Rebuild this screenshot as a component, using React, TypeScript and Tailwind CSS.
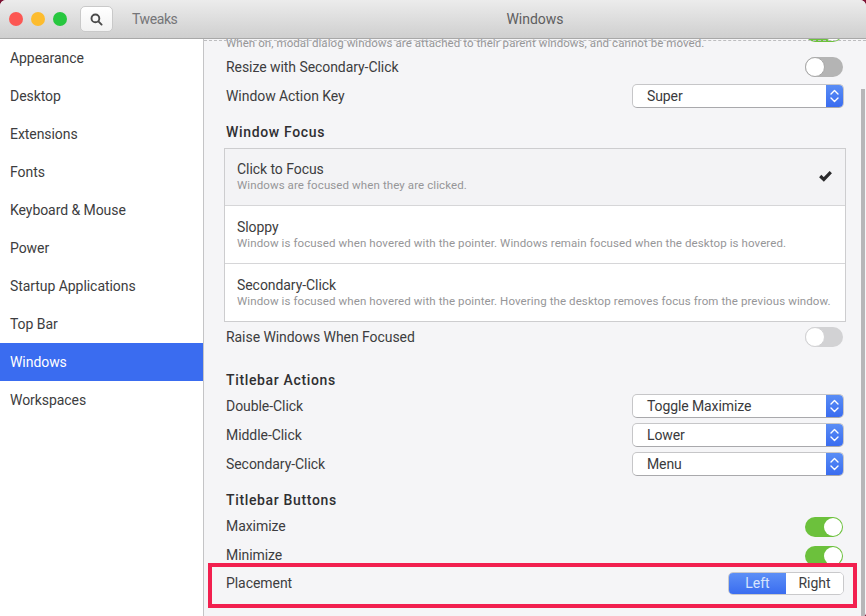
import React from "react";

const font = { fontFamily: "Roboto, 'Liberation Sans', sans-serif" };

const nav = ["Appearance", "Desktop", "Extensions", "Fonts", "Keyboard & Mouse", "Power", "Startup Applications", "Top Bar", "Windows", "Workspaces"];

function Toggle({ on, dim }: { on?: boolean; dim?: boolean }) {
  if (on) {
    return (
      <div className="mr-px flex h-5 w-[38px] items-center justify-end rounded-full bg-[#6cc13c]">
        <div className="mr-px h-[18px] w-[18px] rounded-full bg-white" />
      </div>
    );
  }
  return (
    <div className={`mr-px flex h-5 w-[38px] items-center rounded-full ${dim ? "bg-[#d2d2d4]" : "bg-[#b4b4b4]"}`}>
      <div className={`h-5 w-5 rounded-full border bg-white ${dim ? "border-[#d2d2d4]" : "border-[#a8a8a8]"}`} />
    </div>
  );
}

function Select({ value, lift }: { value: string; lift?: boolean }) {
  return (
    <div className={`flex h-6 w-[212px] overflow-hidden rounded-[5px] border border-[#c6c6c8] border-b-[#a9a9ac] bg-white ${lift ? "mb-px" : ""}`}>
      <div className="flex-1 pl-[14px] text-[14px] leading-[22px] tracking-[-0.1px] text-[#3a3a3c]">{value}</div>
      <div className="flex w-[17px] items-center justify-center bg-gradient-to-b from-[#5a8df5] to-[#3a6cf0]">
        <svg width="11" height="16" viewBox="0 0 11 16" fill="none" stroke="#fff" strokeWidth="1.4" strokeLinecap="round" strokeLinejoin="round">
          <path d="M2 6 L5.5 2.5 L9 6" />
          <path d="M2 10 L5.5 13.5 L9 10" />
        </svg>
      </div>
    </div>
  );
}

function Row({ label, h, children }: { label: string; h: string; children: React.ReactNode }) {
  return (
    <div className={`flex items-center justify-between ${h}`}>
      <span className="text-[14px] tracking-[-0.06px] text-[#3d3d40]">{label}</span>
      {children}
    </div>
  );
}

function Heading({ children, cls }: { children: React.ReactNode; cls: string }) {
  return <div className={`text-[14px] font-medium leading-5 tracking-[0.65px] text-[#2f2f32] ${cls}`}>{children}</div>;
}

function Item({ title, desc, active, h, border }: { title: string; desc: string; active?: boolean; h: string; border?: boolean }) {
  return (
    <div className={`flex items-center justify-between px-3 ${h} ${active ? "bg-[#f3f3f5] pb-[2px]" : "bg-white"} ${border ? "border-b border-[#d6d6d8]" : ""}`}>
      <div>
        <div className="text-[14px] leading-[18px] tracking-[-0.06px] text-[#3d3d40]">{title}</div>
        <div className="text-[11.5px] leading-[15px] tracking-[0.1px] text-[#969698]">{desc}</div>
      </div>
      {active && (
        <svg width="13" height="12" viewBox="0 0 13 12" className="mr-px">
          <path d="M1.2 6 L4.8 9.4 L11.8 2.2" fill="none" stroke="#2a2a2c" strokeWidth="3.2" />
        </svg>
      )}
    </div>
  );
}

export default function App() {
  return (
    <div className="h-[616px] w-[866px] overflow-hidden bg-[#7d1233]">
      <div style={font} className="relative flex h-[616px] w-[866px] flex-col overflow-hidden rounded-t-[6px] rounded-br-[3px] bg-[#f5f5f7]">
        <header className="flex h-[39px] shrink-0 items-center border-b border-[#a8a8a8] bg-gradient-to-b from-[#ececec] to-[#cfcfcf]">
          <div className="flex w-[204px] shrink-0 items-center pl-[9px]">
            <div className="h-[14px] w-[14px] rounded-full bg-[#fc5753]" />
            <div className="ml-2 h-[14px] w-[14px] rounded-full bg-[#fdbc2e]" />
            <div className="ml-2 h-[14px] w-[14px] rounded-full bg-[#27c73f]" />
            <div className="ml-[13px] flex h-[26px] w-[33px] items-center justify-center rounded-[5px] border border-[#c9c9c9] bg-gradient-to-b from-white to-[#f2f2f2]">
              <svg width="13" height="13" viewBox="0 0 13 13" fill="none" stroke="#4a4a4a" strokeWidth="1.9" strokeLinecap="round">
                <circle cx="5.4" cy="5.4" r="3.9" />
                <path d="M8.4 8.4 L11.6 11.6" />
              </svg>
            </div>
            <span className="ml-[19px] text-[14px] tracking-[-0.4px] text-[#757578]">Tweaks</span>
          </div>
          <div className="flex-1 text-center text-[14px] text-[#5e5e60]">Windows</div>
        </header>

        <div className="flex min-h-0 flex-1">
          <aside className="w-[204px] shrink-0 border-r border-[#c4c4c6] bg-white">
            {nav.map((n) => (
              <div key={n} className={`flex h-[38px] items-center pl-[10px] text-[14px] tracking-[-0.06px] ${n === "Windows" ? "bg-[#3a6cf0] text-white" : "text-[#3d3d40]"}`}>
                {n}
              </div>
            ))}
          </aside>

          <main className="relative min-w-0 flex-1 overflow-hidden px-[22px]">
            <div className="-mt-[7px]">
              <div className="-mb-[10px] flex h-[24px] items-center justify-between">
                <span className="text-[11.5px] tracking-[0.07px] text-[#969698]">When on, modal dialog windows are attached to their parent windows, and cannot be moved.</span>
                <div className="-mt-[24px]"><Toggle on /></div>
              </div>
              <Row label="Resize with Secondary-Click" h="h-[30px] mt-[6px]"><Toggle /></Row>
              <Row label="Window Action Key" h="h-[28px]"><Select value="Super" /></Row>
              <Heading cls="mt-[12px]">Window Focus</Heading>
              <div className="-mx-[2px] mt-[6px] border border-[#cdcdcf]">
                <Item active border h="h-[57px]" title="Click to Focus" desc="Windows are focused when they are clicked." />
                <Item border h="h-[58px]" title="Sloppy" desc="Window is focused when hovered with the pointer. Windows remain focused when the desktop is hovered." />
                <Item h="h-[57px]" title="Secondary-Click" desc="Window is focused when hovered with the pointer. Hovering the desktop removes focus from the previous window." />
              </div>
              <Row label="Raise Windows When Focused" h="h-[30px]"><Toggle dim /></Row>
              <Heading cls="mt-[18px]">Titlebar Actions</Heading>
              <Row label="Double-Click" h="h-[29px] mt-[2px]"><Select lift value="Toggle Maximize" /></Row>
              <Row label="Middle-Click" h="h-[29px]"><Select lift value="Lower" /></Row>
              <Row label="Secondary-Click" h="h-[29px]"><Select lift value="Menu" /></Row>
              <Heading cls="mt-[11px]">Titlebar Buttons</Heading>
              <Row label="Maximize" h="h-[29px] mt-[2px]"><Toggle on /></Row>
              <Row label="Minimize" h="h-[29px]"><Toggle on /></Row>
              <Row label="Placement" h="h-[27px]">
                <div className="flex h-[23px] w-[116px] overflow-hidden rounded-[5px] border border-[#c9c9cb] text-[14px]">
                  <div className="flex w-[57px] items-center justify-center bg-gradient-to-b from-[#5d8ff6] to-[#3a6cf0] text-[#d8e4fd]">Left</div>
                  <div className="flex flex-1 items-center justify-center bg-white text-[#3d3d40]">Right</div>
                </div>
              </Row>
            </div>

            <div className="absolute inset-x-0 top-[1px] border-t border-dashed border-[#bdbdbf]" />
            <div className="absolute bottom-0 right-[1px] top-[50px] w-[4px] bg-[#b6b6b8]" />
          </main>
        </div>

        <div className="pointer-events-none absolute left-[208px] top-[563px] h-[45px] w-[649px] border-[4px] border-[#f2204f]" />
      </div>
    </div>
  );
}
